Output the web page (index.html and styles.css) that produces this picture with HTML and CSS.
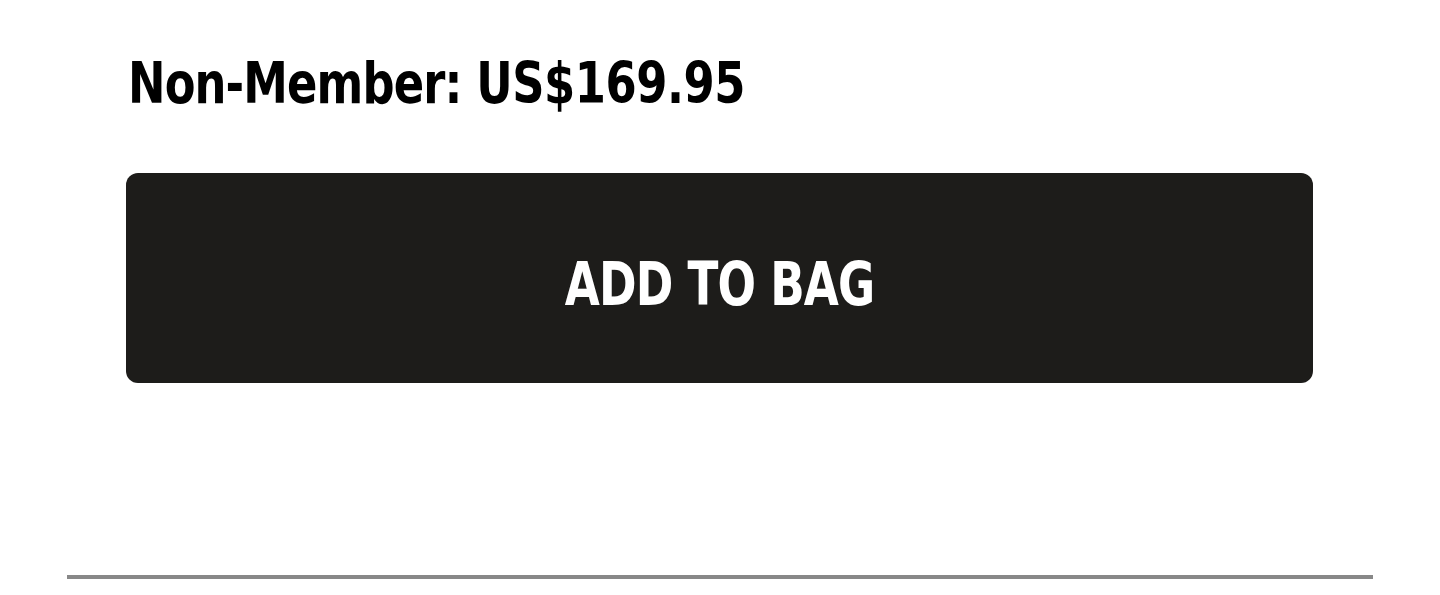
FILE: index.html
```html
<!DOCTYPE html>
<html>
<head>
<meta charset="utf-8">
<link rel="stylesheet" href="styles.css">
</head>
<body>
<div class="page">
  <div class="buy">
    <p class="price"><span class="price-text">Non-Member: <span class="amount">US$169.95</span></span></p>
    <button class="add"><span class="add-text">ADD TO BAG</span></button>
  </div>
  <hr class="rule">
</div>
</body>
</html>
```
FILE: styles.css
```css
html, body {
  margin: 0;
  padding: 0;
  background: #fff;
}
.page {
  width: 1440px;
  height: 595px;
  padding-top: 48px;
  box-sizing: border-box;
}
.buy {
  padding: 0 127px 0 126px;
  display: flex;
  flex-direction: column;
}
.price {
  margin: 0 0 0 2px;
  font-family: "DejaVu Sans Condensed", "Liberation Sans", sans-serif;
  font-weight: 700;
  font-size: 57px;
  line-height: 70px;
  color: #000;
}
.price-text {
  display: inline-block;
  white-space: nowrap;
  letter-spacing: -1px;
  transform: scaleX(0.874);
  transform-origin: left center;
}
.amount {
  letter-spacing: -0.5px;
}
.add {
  margin-top: 55px;
  height: 210px;
  border: 0;
  border-radius: 12px;
  background: #1d1c1a;
  color: #fff;
  font-family: "DejaVu Sans Condensed", "Liberation Sans", sans-serif;
  font-weight: 700;
  font-size: 61px;
  padding: 10px 0 0;
}
.add-text {
  display: inline-block;
  letter-spacing: -1px;
  transform: scaleX(0.825);
}
.rule {
  margin: 192px 67px 0 67px;
  height: 4px;
  border: 0;
  background: #888;
}
```
